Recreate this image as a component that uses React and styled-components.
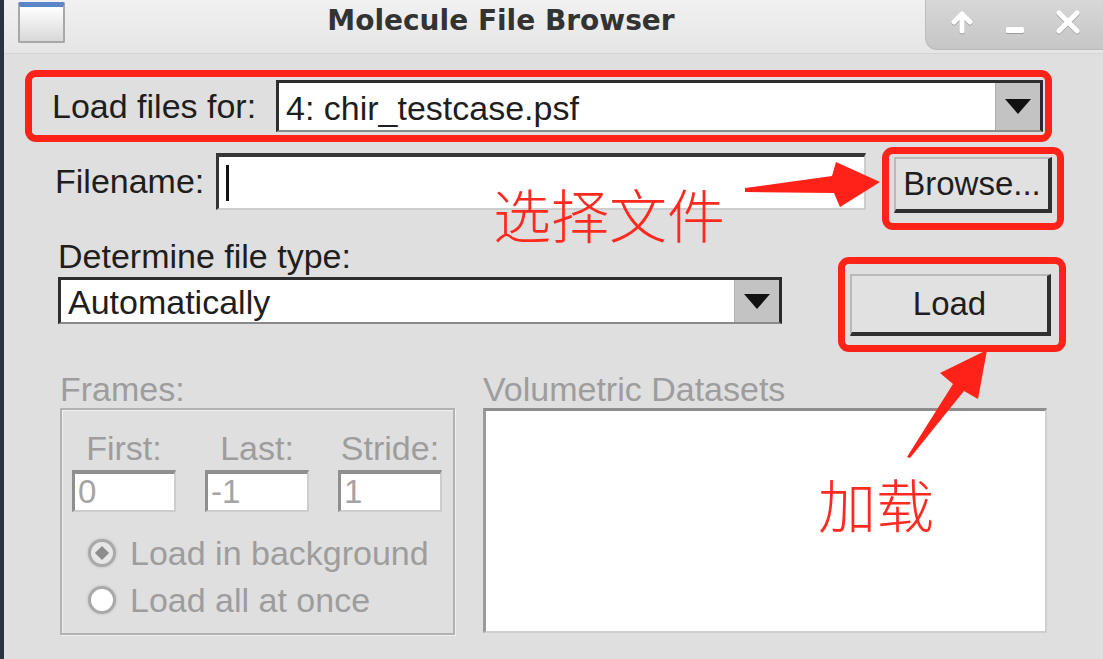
import React from "react";
import styled, { createGlobalStyle } from "styled-components";

const Global = createGlobalStyle`
  html, body { margin: 0; padding: 0; }
  body {
    width: 1103px;
    height: 659px;
    overflow: hidden;
    background: #dfdfdf;
    font-family: "Liberation Sans", Arial, sans-serif;
  }
`;

const RED = "#fe2218";

const Page = styled.div`
  position: relative;
  display: flex;
  width: 1103px;
  height: 659px;
  overflow: hidden;
  background: #dfdfdf;
`;

const LeftStrip = styled.div`
  flex: none;
  width: 4px;
  background: #2b3340;
`;

const Window = styled.div`
  flex: 1;
  display: flex;
  flex-direction: column;
  color: #1e1e1e;
`;

const TitleBar = styled.div`
  box-sizing: border-box;
  height: 54px;
  display: flex;
  align-items: flex-start;
  background: linear-gradient(#f1f1f1, #e5e5e5);
  border-bottom: 1px solid #d4d4d4;
`;

const AppIcon = styled.div`
  box-sizing: border-box;
  flex: none;
  margin: 2px 0 0 14px;
  width: 47px;
  height: 41px;
  border: 2px solid #a8a8a8;
  border-top: 5px solid #5a86c8;
  border-radius: 2px;
  background: linear-gradient(#ffffff, #d8d8d8);
`;

const Title = styled.div`
  flex: 1;
  padding-left: 12px;
  text-align: center;
  font-family: "DejaVu Sans", Verdana, sans-serif;
  font-weight: bold;
  font-size: 28px;
  line-height: 42px;
  color: #333;
`;

const ControlsTab = styled.div`
  box-sizing: border-box;
  flex: none;
  width: 178px;
  height: 50px;
  display: flex;
  align-items: flex-start;
  gap: 29px;
  padding: 10px 0 0 24px;
  background: linear-gradient(#d7d7d7, #c6c6c6);
  border-bottom-left-radius: 12px;
  border-left: 1px solid #bdbdbd;
  border-bottom: 1px solid #b9b9b9;
`;

const CtlIcon = styled.svg`
  width: 24px;
  height: 24px;
  filter: drop-shadow(0 1px 0 #9c9c9c);
`;

const Content = styled.div`
  display: flex;
  flex-direction: column;
`;

const RedBox = styled.div`
  box-sizing: border-box;
  border: 7px solid ${RED};
  border-radius: 11px;
  display: flex;
`;

const LoadForRow = styled(RedBox)`
  margin: 16px 0 0 21px;
  width: 1027px;
  height: 72px;
  align-items: center;
  padding: 0 2px 0 20px;
`;

const Label = styled.div`
  flex: none;
  font-size: 34px;
  line-height: ${(p) => p.$lh || 40}px;
  width: ${(p) => (p.$w ? `${p.$w}px` : "auto")};
  color: ${(p) => (p.$disabled ? "#9d9d9d" : "#1e1e1e")};
  white-space: nowrap;
`;

const Combo = styled.div`
  box-sizing: border-box;
  display: flex;
  height: ${(p) => p.$h}px;
  ${(p) => (p.$w ? `width: ${p.$w}px;` : "flex: 1;")}
  margin-top: ${(p) => p.$mt || 0}px;
  background: #fff;
  border-top: 3px solid #2e2e2e;
  border-left: 3px solid #2e2e2e;
  border-right: 3px solid #2a2a2a;
  border-bottom: 2px solid #8a8a8a;
`;

const ComboValue = styled.div`
  flex: 1;
  display: flex;
  align-items: center;
  padding: 3px 0 0 7px;
  font-size: 34px;
  color: #1e1e1e;
`;

const ComboButton = styled.div`
  flex: none;
  width: 44px;
  display: flex;
  align-items: center;
  justify-content: center;
  background: #c3c3c3;
  border-left: 1px solid #b0b0b0;
`;

const Triangle = styled.div`
  width: 0;
  height: 0;
  border-left: 13px solid transparent;
  border-right: 13px solid transparent;
  border-top: 15px solid #111;
`;

const FileRow = styled.div`
  display: flex;
  align-items: flex-start;
  margin-top: 5px;
`;

const Entry = styled.div`
  box-sizing: border-box;
  flex: none;
  width: ${(p) => p.$w}px;
  height: ${(p) => p.$h}px;
  margin-top: ${(p) => p.$mt || 0}px;
  display: flex;
  align-items: center;
  background: #fff;
  border-top: 4px solid ${(p) => (p.$disabled ? "#8f8f8f" : "#353535")};
  border-left: 3px solid ${(p) => (p.$disabled ? "#8f8f8f" : "#353535")};
  border-right: 2px solid #cdcdcd;
  border-bottom: 2px solid #cdcdcd;
  font-size: 33px;
  color: #a4a4a4;
  padding-left: 3px;
`;

const Caret = styled.div`
  width: 3px;
  height: 36px;
  margin-left: 4px;
  background: #111;
`;

const BrowseBox = styled(RedBox)`
  margin-left: 16px;
  width: 182px;
  height: 83px;
  padding: 3px 5px 10px 5px;
`;

const Button = styled.div`
  box-sizing: border-box;
  flex: 1;
  display: flex;
  align-items: center;
  justify-content: center;
  background: #e1e1e1;
  border-top: 2px solid #b9b9b9;
  border-left: 2px solid #b9b9b9;
  border-right: 4px solid #2f2f2f;
  border-bottom: 4px solid #2f2f2f;
  font-size: 33px;
  color: #1e1e1e;
`;

const TypeRow = styled.div`
  display: flex;
  align-items: flex-start;
  height: 122px;
`;

const TypeColumn = styled.div`
  display: flex;
  flex-direction: column;
  margin-left: 54px;
  width: 724px;
`;

const LoadBox = styled(RedBox)`
  margin: 27px 0 0 56px;
  width: 228px;
  height: 95px;
  padding: 10px 8px 9px 5px;
`;

const BottomRow = styled.div`
  display: flex;
  margin-top: 18px;
`;

const Section = styled.div`
  display: flex;
  flex-direction: column;
  margin-left: ${(p) => p.$ml}px;
  width: ${(p) => p.$w}px;
`;

const GroupBox = styled.div`
  box-sizing: border-box;
  height: 227px;
  border: 2px solid #b2b2b2;
  box-shadow: inset 1px 1px 0 #f0f0f0, 1px 1px 0 #f0f0f0;
  padding: 20px 10px 0 10px;
  display: flex;
  flex-direction: column;
`;

const FrameFields = styled.div`
  display: flex;
  gap: 29px;
`;

const FrameField = styled.div`
  display: flex;
  flex-direction: column;
  align-items: center;
  width: 104px;
`;

const Radios = styled.div`
  display: flex;
  flex-direction: column;
  margin-top: 17px;
  padding-left: 16px;
`;

const RadioRow = styled.div`
  display: flex;
  align-items: center;
  gap: 14px;
  height: 47px;
`;

const RadioDot = styled.div`
  box-sizing: border-box;
  width: 28px;
  height: 28px;
  border-radius: 50%;
  border: 3px solid #a9a9a9;
  box-shadow: 0 0 3px #b8b8b8;
  display: flex;
  align-items: center;
  justify-content: center;
  background: ${(p) => (p.$on ? "#e6e6e6" : "#ffffff")};
`;

const RadioMark = styled.div`
  width: 10px;
  height: 10px;
  background: #8c8c8c;
  transform: rotate(45deg);
`;

const ListBox = styled.div`
  box-sizing: border-box;
  height: 225px;
  background: #fff;
  border-top: 3px solid #8d8d8d;
  border-left: 3px solid #9a9a9a;
  border-right: 2px solid #cfcfcf;
  border-bottom: 2px solid #cfcfcf;
`;

const Note = styled.div`
  position: absolute;
  left: ${(p) => p.$x}px;
  top: ${(p) => p.$y}px;
  font-family: "Noto Sans CJK SC", "Noto Sans CJK JP", sans-serif;
  font-weight: 300;
  font-size: 58px;
  line-height: 58px;
  color: #ff2a1f;
  white-space: nowrap;
  pointer-events: none;
`;

const Overlay = styled.svg`
  position: absolute;
  left: 0;
  top: 0;
  width: 1103px;
  height: 659px;
  pointer-events: none;
`;

export default function App() {
  return (
    <>
      <Global />
      <Page>
        <LeftStrip />
        <Window>
          <TitleBar>
            <AppIcon />
            <Title>Molecule File Browser</Title>
            <ControlsTab>
              <CtlIcon viewBox="0 0 24 24">
                <polyline points="4,12 12,4 20,12" fill="none" stroke="#fff" strokeWidth="5" strokeLinecap="round" strokeLinejoin="round" />
                <line x1="12" y1="6" x2="12" y2="21" stroke="#fff" strokeWidth="5" strokeLinecap="round" />
              </CtlIcon>
              <CtlIcon viewBox="0 0 24 24">
                <rect x="3" y="17" width="18" height="6" rx="1.5" fill="#fff" />
              </CtlIcon>
              <CtlIcon viewBox="0 0 24 24">
                <line x1="3" y1="3" x2="21" y2="21" stroke="#fff" strokeWidth="5" strokeLinecap="round" />
                <line x1="21" y1="3" x2="3" y2="21" stroke="#fff" strokeWidth="5" strokeLinecap="round" />
              </CtlIcon>
            </ControlsTab>
          </TitleBar>

          <Content>
            <LoadForRow>
              <Label $w={224}>Load files for:</Label>
              <Combo $h={52}>
                <ComboValue>4: chir_testcase.psf</ComboValue>
                <ComboButton>
                  <Triangle />
                </ComboButton>
              </Combo>
            </LoadForRow>

            <FileRow>
              <Label $w={161} $lh={57} style={{ marginLeft: 51, marginTop: 6 }}>
                Filename:
              </Label>
              <Entry $w={650} $h={57} $mt={6}>
                <Caret />
              </Entry>
              <BrowseBox>
                <Button>Browse...</Button>
              </BrowseBox>
            </FileRow>

            <TypeRow>
              <TypeColumn>
                <Label style={{ marginTop: 6 }}>Determine file type:</Label>
                <Combo $h={55} $mt={1}>
                  <ComboValue>Automatically</ComboValue>
                  <ComboButton>
                    <Triangle />
                  </ComboButton>
                </Combo>
              </TypeColumn>
              <LoadBox>
                <Button>Load</Button>
              </LoadBox>
            </TypeRow>

            <BottomRow>
              <Section $ml={56} $w={395}>
                <Label $disabled $lh={38}>Frames:</Label>
                <GroupBox>
                  <FrameFields>
                    <FrameField>
                      <Label $disabled $lh={36}>First:</Label>
                      <Entry $disabled $w={104} $h={42} $mt={4}>0</Entry>
                    </FrameField>
                    <FrameField>
                      <Label $disabled $lh={36}>Last:</Label>
                      <Entry $disabled $w={104} $h={42} $mt={4}>-1</Entry>
                    </FrameField>
                    <FrameField>
                      <Label $disabled $lh={36}>Stride:</Label>
                      <Entry $disabled $w={104} $h={42} $mt={4}>1</Entry>
                    </FrameField>
                  </FrameFields>
                  <Radios>
                    <RadioRow>
                      <RadioDot $on>
                        <RadioMark />
                      </RadioDot>
                      <Label $disabled>Load in background</Label>
                    </RadioRow>
                    <RadioRow>
                      <RadioDot />
                      <Label $disabled>Load all at once</Label>
                    </RadioRow>
                  </Radios>
                </GroupBox>
              </Section>
              <Section $ml={28} $w={564}>
                <Label $disabled $lh={38}>Volumetric Datasets</Label>
                <ListBox />
              </Section>
            </BottomRow>
          </Content>
        </Window>

        <Overlay viewBox="0 0 1103 659">
          <polygon
            points="745,188 832,176 836,162 880,182 840,207 834,193 745,192"
            fill={RED}
          />
          <polygon
            points="907,457 953,384 940,373 987,350 978,399 964,391 910,458"
            fill={RED}
          />
        </Overlay>
        <Note $x={493} $y={184}>选择文件</Note>
        <Note $x={818} $y={474}>加载</Note>
      </Page>
    </>
  );
}
